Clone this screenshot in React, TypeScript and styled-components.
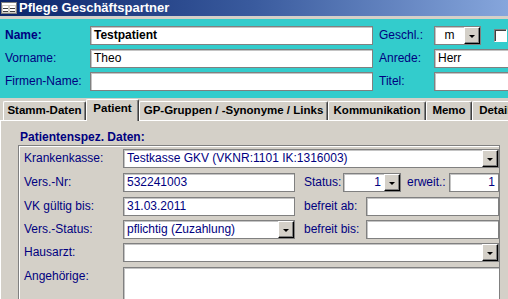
import React from "react";
import styled, { createGlobalStyle, css } from "styled-components";

const Global = createGlobalStyle`
  html, body { margin: 0; padding: 0; background: #D4D0C8; overflow: hidden; }
  body { font-family: "Liberation Sans", Arial, sans-serif; font-size: 12px; }
  #root { width: 508px; height: 299px; }
`;

const Window = styled.div`
  width: 508px;
  height: 299px;
  overflow: hidden;
  display: flex;
  flex-direction: column;
  background: #d4d0c8;
`;

const TitleBar = styled.div`
  flex: none;
  height: 16px;
  display: flex;
  align-items: center;
  gap: 2px;
  padding-left: 1px;
  background: linear-gradient(90deg, #0a246a 0%, #3a5b9e 50%, #86a6dc 100%);
`;

const Title = styled.span`
  color: #fff;
  font-weight: bold;
  font-size: 13px;
  line-height: 16px;
  white-space: nowrap;
`;

const Separator = styled.div`
  flex: none;
  height: 3px;
  background: #d4d0c8;
`;

const Header = styled.div`
  flex: none;
  height: 79px;
  box-sizing: border-box;
  padding: 7px 0 0 5px;
  background: #33cccc;
  display: flex;
  flex-direction: column;
  gap: 4px;
`;

const Row = styled.div<{ $mt?: number }>`
  display: flex;
  align-items: center;
  height: 19px;
  margin-top: ${(p) => p.$mt ?? 0}px;
  white-space: nowrap;
`;

const Label = styled.span<{ $w: number; $bold?: boolean; $ml?: number }>`
  flex: none;
  width: ${(p) => p.$w}px;
  margin-left: ${(p) => p.$ml ?? 0}px;
  color: #000080;
  font-size: 12px;
  font-weight: ${(p) => (p.$bold ? "bold" : "normal")};
  line-height: 19px;
`;

const fieldBox = css`
  flex: none;
  box-sizing: border-box;
  height: 19px;
  background: #fff;
  border: 1px solid #808080;
  box-shadow: inset 1px 1px 0 #c4c4c4;
  font-size: 12px;
  line-height: 17px;
  white-space: nowrap;
  overflow: hidden;
`;

const TextBox = styled.div<{ $w: number; $color?: string; $bold?: boolean; $align?: string }>`
  ${fieldBox};
  width: ${(p) => p.$w}px;
  padding: 0 3px;
  color: ${(p) => p.$color ?? "#000"};
  font-weight: ${(p) => (p.$bold ? "bold" : "normal")};
  text-align: ${(p) => p.$align ?? "left"};
`;

const Combo = styled.div<{ $w: number; $color?: string }>`
  ${fieldBox};
  width: ${(p) => p.$w}px;
  display: flex;
  align-items: stretch;
  color: ${(p) => p.$color ?? "#000"};
`;

const ComboText = styled.span<{ $align?: string }>`
  flex: 1;
  padding: 0 3px;
  text-align: ${(p) => p.$align ?? "left"};
  overflow: hidden;
`;

const DropButton = styled.span`
  flex: none;
  width: 16px;
  box-sizing: border-box;
  background: #d4d0c8;
  border-top: 1px solid #fff;
  border-left: 1px solid #fff;
  border-right: 1px solid #000;
  border-bottom: 1px solid #000;
  box-shadow: inset -1px -1px 0 #808080;
  display: flex;
  align-items: center;
  justify-content: center;
`;

const Arrow = styled.span`
  width: 0;
  height: 0;
  border-left: 3px solid transparent;
  border-right: 3px solid transparent;
  border-top: 3px solid #000;
  margin-top: 1px;
`;

const CheckBox = styled.span`
  flex: none;
  width: 13px;
  height: 13px;
  box-sizing: border-box;
  margin-left: 13px;
  background: #fff;
  border-top: 1px solid #808080;
  border-left: 1px solid #808080;
  border-right: 1px solid #fff;
  border-bottom: 1px solid #fff;
  box-shadow: inset 1px 1px 0 #404040;
`;

const TabStrip = styled.div`
  flex: none;
  height: 22px;
  box-sizing: border-box;
  padding: 0 0 0 3px;
  display: flex;
  align-items: flex-end;
`;

const Tab = styled.div<{ $w: number; $active?: boolean }>`
  flex: none;
  width: ${(p) => p.$w}px;
  height: ${(p) => (p.$active ? 22 : 19)}px;
  box-sizing: border-box;
  border-top: 1px solid #fff;
  border-left: 1px solid #fff;
  border-right: 1px solid #404040;
  box-shadow: inset -1px 0 0 #808080;
  border-radius: 2px 2px 0 0;
  background: #d4d0c8;
  font-weight: bold;
  font-size: 11.5px;
  color: #000;
  text-align: center;
  line-height: ${(p) => (p.$active ? 16 : 17)}px;
  white-space: nowrap;
  overflow: hidden;
  position: relative;
  z-index: ${(p) => (p.$active ? 1 : 0)};
  margin-bottom: ${(p) => (p.$active ? -1 : 0)}px;
`;

const Panel = styled.div`
  flex: 1;
  border-top: 1px solid #fff;
  border-left: 1px solid #fff;
  padding: 0 0 0 17px;
`;

const SectionTitle = styled.div`
  color: #000080;
  font-weight: bold;
  font-size: 12px;
  line-height: 14px;
  margin: 9px 0 0 2px;
`;

const GroupBox = styled.div`
  margin-top: 1px;
  width: 482px;
  height: 200px;
  box-sizing: border-box;
  border: 1px solid #808080;
  box-shadow: inset 1px 1px 0 #fff;
  padding: 3px 0 0 5px;
`;

const Memo = styled.div`
  flex: none;
  box-sizing: border-box;
  width: 377px;
  height: 40px;
  background: #fff;
  border: 1px solid #808080;
  box-shadow: inset 1px 1px 0 #c4c4c4;
`;

const MemoRow = styled.div`
  display: flex;
  align-items: flex-start;
  margin-top: 5px;
`;

const FormIcon = () => (
  <svg width="16" height="14" viewBox="0 0 16 14">
    <rect x="0.5" y="1.5" width="15" height="11" fill="#d4d0c8" stroke="#808080" />
    <rect x="1" y="2" width="14" height="2" fill="#ffffff" />
    <rect x="2" y="5" width="5" height="2" fill="#ffffff" />
    <rect x="9" y="5" width="5" height="2" fill="#ffffff" />
    <rect x="2" y="8" width="5" height="2" fill="#ffffff" />
    <rect x="9" y="8" width="5" height="2" fill="#ffffff" />
    <rect x="2" y="7" width="5" height="1" fill="#404040" />
    <rect x="9" y="7" width="5" height="1" fill="#404040" />
    <rect x="2" y="10" width="5" height="1" fill="#404040" />
    <rect x="9" y="10" width="5" height="1" fill="#404040" />
  </svg>
);

const NAVY = "#000080";

export default function App() {
  return (
    <Window>
      <Global />
      <TitleBar>
        <FormIcon />
        <Title>Pflege Geschäftspartner</Title>
      </TitleBar>
      <Separator />
      <Header>
        <Row>
          <Label $w={85} $bold>Name:</Label>
          <TextBox $w={283} $bold>Testpatient</TextBox>
          <Label $w={55} $ml={6}>Geschl.:</Label>
          <Combo $w={47}>
            <ComboText $align="center">m</ComboText>
            <DropButton><Arrow /></DropButton>
          </Combo>
          <CheckBox />
        </Row>
        <Row>
          <Label $w={85}>Vorname:</Label>
          <TextBox $w={283}>Theo</TextBox>
          <Label $w={55} $ml={6}>Anrede:</Label>
          <TextBox $w={90}>Herr</TextBox>
        </Row>
        <Row>
          <Label $w={85}>Firmen-Name:</Label>
          <TextBox $w={283}></TextBox>
          <Label $w={55} $ml={6}>Titel:</Label>
          <TextBox $w={90}></TextBox>
        </Row>
      </Header>
      <TabStrip>
        <Tab $w={83}>Stamm-Daten</Tab>
        <Tab $w={53} $active>Patient</Tab>
        <Tab $w={189}>GP-Gruppen / -Synonyme / Links</Tab>
        <Tab $w={98}>Kommunikation</Tab>
        <Tab $w={46}>Memo</Tab>
        <Tab $w={52}>Details</Tab>
      </TabStrip>
      <Panel>
        <SectionTitle>Patientenspez. Daten:</SectionTitle>
        <GroupBox>
          <Row>
            <Label $w={99}>Krankenkasse:</Label>
            <Combo $w={376} $color={NAVY}>
              <ComboText>Testkasse GKV (VKNR:1101 IK:1316003)</ComboText>
              <DropButton><Arrow /></DropButton>
            </Combo>
          </Row>
          <Row $mt={5}>
            <Label $w={99}>Vers.-Nr:</Label>
            <TextBox $w={172} $color={NAVY}>532241003</TextBox>
            <Label $w={39} $ml={9}>Status:</Label>
            <Combo $w={58} $color={NAVY}>
              <ComboText $align="right">1</ComboText>
              <DropButton><Arrow /></DropButton>
            </Combo>
            <Label $w={42} $ml={6}>erweit.:</Label>
            <TextBox $w={50} $color={NAVY} $align="right">1</TextBox>
          </Row>
          <Row $mt={5}>
            <Label $w={99}>VK gültig bis:</Label>
            <TextBox $w={172} $color={NAVY}>31.03.2011</TextBox>
            <Label $w={62} $ml={9}>befreit ab:</Label>
            <TextBox $w={133}></TextBox>
          </Row>
          <Row $mt={4}>
            <Label $w={99}>Vers.-Status:</Label>
            <Combo $w={172} $color={NAVY}>
              <ComboText>pflichtig (Zuzahlung)</ComboText>
              <DropButton><Arrow /></DropButton>
            </Combo>
            <Label $w={62} $ml={9}>befreit bis:</Label>
            <TextBox $w={133}></TextBox>
          </Row>
          <Row $mt={4}>
            <Label $w={99}>Hausarzt:</Label>
            <Combo $w={376}>
              <ComboText></ComboText>
              <DropButton><Arrow /></DropButton>
            </Combo>
          </Row>
          <MemoRow>
            <Label $w={99}>Angehörige:</Label>
            <Memo />
          </MemoRow>
        </GroupBox>
      </Panel>
    </Window>
  );
}
